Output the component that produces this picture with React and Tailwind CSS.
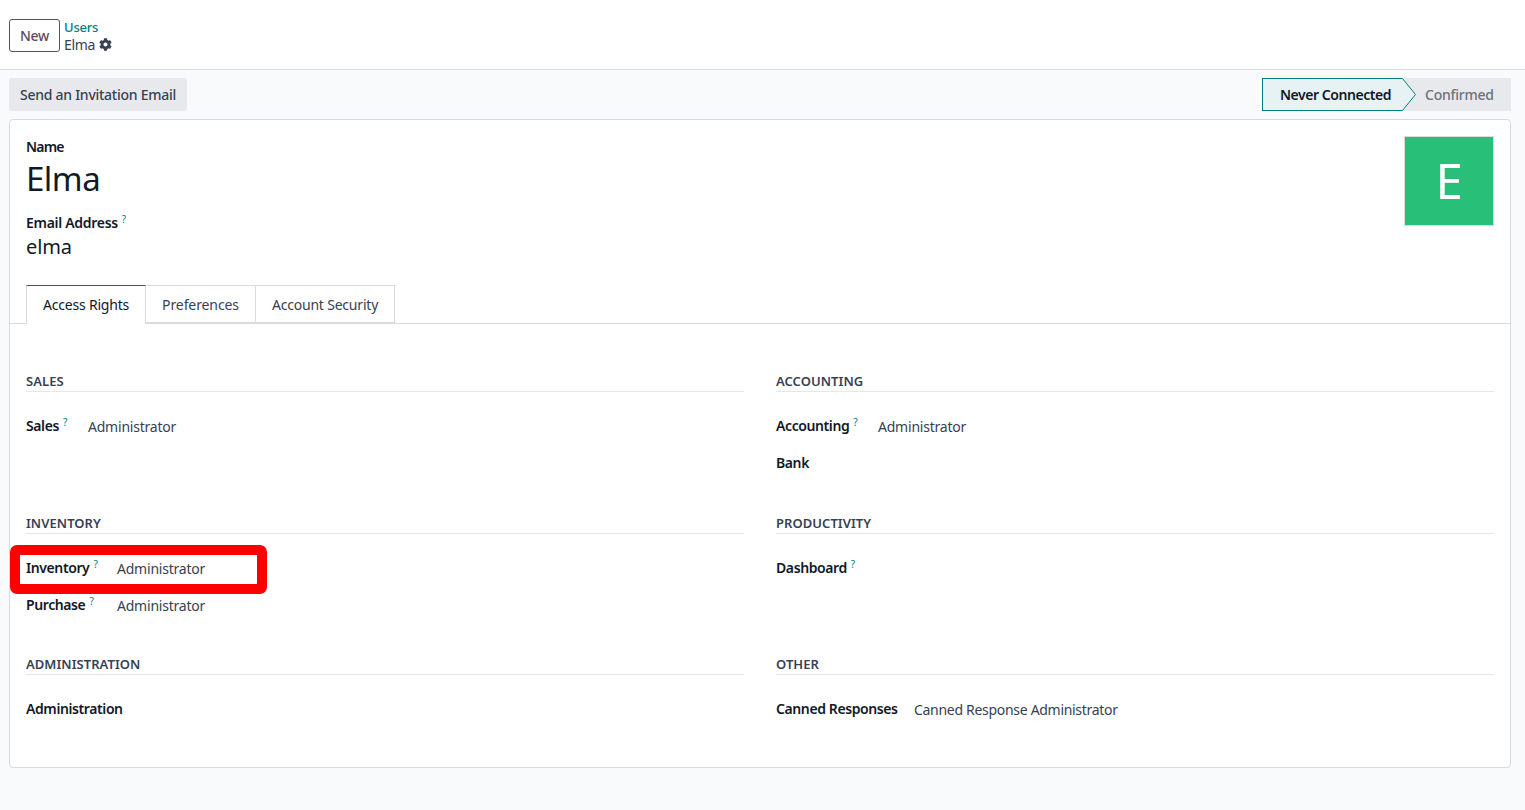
const font = { fontFamily: '"Noto Sans", sans-serif' };

function Help() {
  return <sup className="ml-1 -top-[5px] relative align-baseline text-[10px] leading-none text-[#017e84] font-normal">?</sup>;
}

function Section({ title, children }) {
  return (
    <div className="h-[141.5px]">
      <div className="h-[18px] border-b border-[#e5e7eb] text-[13px] leading-[15.6px] font-semibold text-[#374151] tracking-[0.05px]">{title}</div>
      <div className="pt-[24px]">{children}</div>
    </div>
  );
}

function Row({ label, help, value, labelWidth, rowHeight = "h-[36.5px]", valueTracking = "tracking-[-0.22px]" }) {
  return (
    <div className={`flex ${rowHeight} items-start text-[14px] leading-[20px]`}>
      <div className={`${labelWidth} shrink-0 font-semibold text-[#111827] tracking-[-0.4px]`}>
        {label}
        {help && <Help />}
      </div>
      <div className={`text-[#374151] ${valueTracking} pt-[1px]`}>{value}</div>
    </div>
  );
}

export default function App() {
  return (
    <div style={font} className="relative h-[810px] w-[1525px] overflow-hidden bg-[#f9fafb] text-[14px] text-[#374151]">
      <header className="flex h-[70px] items-center gap-[4px] border-b border-[#d8dadd] bg-white pl-[9px] pt-[1px]">
        <button className="h-[33px] w-[51px] rounded-[3px] border border-[#5f5260] bg-white text-[14px] font-medium text-[#5f4b5c] tracking-[-0.3px]">New</button>
        <div className="mt-[2px] flex flex-col leading-[17px]">
          <span className="text-[13px] font-medium text-[#017e84] tracking-[-0.2px]">Users</span>
          <span className="flex items-center gap-[4px] text-[14px] text-[#374151] tracking-[-0.3px]">
            Elma
            <svg viewBox="0 0 512 512" className="h-[13px] w-[13px] fill-[#374151]">
              <path d="M487.4 315.7l-42.6-24.6c4.3-23.2 4.3-47 0-70.2l42.6-24.6c4.9-2.8 7.1-8.6 5.5-14-11.1-35.6-30-67.8-54.7-94.6-3.8-4.1-10-5.1-14.8-2.3L380.8 110c-17.9-15.4-38.5-27.3-60.8-35.1V25.8c0-5.6-3.9-10.5-9.4-11.7-36.7-8.2-74.3-7.8-109.2 0-5.5 1.2-9.4 6.1-9.4 11.7V75c-22.2 7.9-42.8 19.8-60.8 35.1L88.7 85.5c-4.9-2.8-11-1.9-14.8 2.3-24.7 26.7-43.6 58.9-54.7 94.6-1.7 5.4.6 11.2 5.5 14L67.3 221c-4.3 23.2-4.3 47 0 70.2l-42.6 24.6c-4.9 2.8-7.1 8.6-5.5 14 11.1 35.6 30 67.8 54.7 94.6 3.8 4.1 10 5.1 14.8 2.3l42.6-24.6c17.9 15.4 38.5 27.3 60.8 35.1v49.2c0 5.6 3.9 10.5 9.4 11.7 36.7 8.2 74.3 7.8 109.2 0 5.5-1.2 9.4-6.1 9.4-11.7v-49.2c22.2-7.9 42.8-19.8 60.8-35.1l42.6 24.6c4.9 2.8 11 1.9 14.8-2.3 24.7-26.7 43.6-58.9 54.7-94.6 1.5-5.5-.7-11.3-5.6-14.1zM256 336c-44.1 0-80-35.9-80-80s35.9-80 80-80 80 35.9 80 80-35.9 80-80 80z" />
            </svg>
          </span>
        </div>
      </header>

      <div className="flex h-[49px] items-start justify-between pl-[9px] pr-[14px] pt-[8px]">
        <button className="h-[33px] w-[178px] rounded-[3px] bg-[#e7e9ed] text-[14px] font-medium text-[#374151] tracking-[-0.26px]">Send an Invitation Email</button>
        <div className="relative flex h-[33px] bg-[#e7e9ed]">
          <div className="flex h-[33px] w-[140px] items-center justify-center border border-r-0 border-[#017e84] bg-[#e6f2f3] pl-[6px] text-[14px] font-semibold text-[#111827] tracking-[-0.45px]">Never Connected</div>
          <svg viewBox="0 0 14 33" className="h-[33px] w-[14px] shrink-0">
            <path d="M0 0 L0.5 0 L13.5 16.5 L0.5 33 L0 33 Z" fill="#e6f2f3" />
            <path d="M0 0.5 L0.5 0.5 L13.5 16.5 L0.5 32.5 L0 32.5" fill="none" stroke="#017e84" strokeWidth="1" />
          </svg>
          <div className="flex h-[33px] w-[95px] items-center pl-[9px] text-[14px] font-medium text-[#6b7280] tracking-[-0.25px]">Confirmed</div>
        </div>
      </div>

      <main className="mx-[9px] h-[649px] w-[1502px] rounded-[4px] border border-[#d8dadd] bg-white">
        <div className="relative px-[16px] pt-[16px]">
          <div className="absolute right-[16px] top-[16px] flex h-[90px] w-[90px] items-center justify-center border border-[#d8dadd] bg-[#28bf79] pb-[2px] text-[49px] font-normal leading-none text-white">E</div>
          <div className="h-[20px] text-[14px] font-semibold leading-[21px] text-[#111827] tracking-[-0.8px]">Name</div>
          <div className="h-[45px] text-[33px] leading-[45px] text-[#111827] tracking-[-0.5px]">Elma</div>
          <div className="mt-[11px] h-[21px] text-[14px] font-semibold leading-[21px] text-[#111827] tracking-[-0.3px]">Email Address<Help /></div>
          <div className="h-[28px] text-[20px] leading-[28px] text-[#111827] tracking-[-0.1px]">elma</div>
        </div>

        <nav className="mt-[24px] flex h-[39px] border-b border-[#d8dadd] px-[16px]">
          <div className="z-10 flex h-[39px] w-[120px] items-center justify-center border border-b-0 border-[#d8dadd] border-t-[#5f4b5c] border-r-[#d8dadd] bg-white pb-[2px] text-[14px] text-[#111827] tracking-[-0.2px]">Access Rights</div>
          <div className="flex h-[38px] w-[110px] items-center justify-center border-y border-r border-[#d8dadd] text-[14px] text-[#374151] tracking-[-0.1px]">Preferences</div>
          <div className="flex h-[38px] w-[139px] items-center justify-center border-y border-r border-[#d8dadd] text-[14px] text-[#374151] tracking-[-0.2px]">Account Security</div>
        </nav>

        <div className="grid grid-cols-2 gap-x-[32px] px-[16px] pt-[50px]">
          <Section title="SALES"><Row label="Sales" help value="Administrator" labelWidth="w-[62px]" /></Section>
          <Section title="ACCOUNTING">
            <Row label="Accounting" help value="Administrator" labelWidth="w-[102px]" />
            <Row label="Bank" labelWidth="w-[102px]" />
          </Section>
          <Section title="INVENTORY">
            <Row label="Inventory" help value="Administrator" labelWidth="w-[91px]" rowHeight="h-[37px]" />
            <Row label="Purchase" help value="Administrator" labelWidth="w-[91px]" rowHeight="h-[37px]" />
          </Section>
          <Section title="PRODUCTIVITY"><Row label="Dashboard" help labelWidth="w-[102px]" /></Section>
          <Section title="ADMINISTRATION"><Row label="Administration" labelWidth="w-[150px]" /></Section>
          <Section title="OTHER"><Row label="Canned Responses" value="Canned Response Administrator" labelWidth="w-[138px]" valueTracking="tracking-[-0.3px]" /></Section>
        </div>
      </main>

      <div className="pointer-events-none absolute left-[10px] top-[545px] h-[49px] w-[257px] rounded-[7px] border-[10px] border-[#ff0000]" />
    </div>
  );
}
